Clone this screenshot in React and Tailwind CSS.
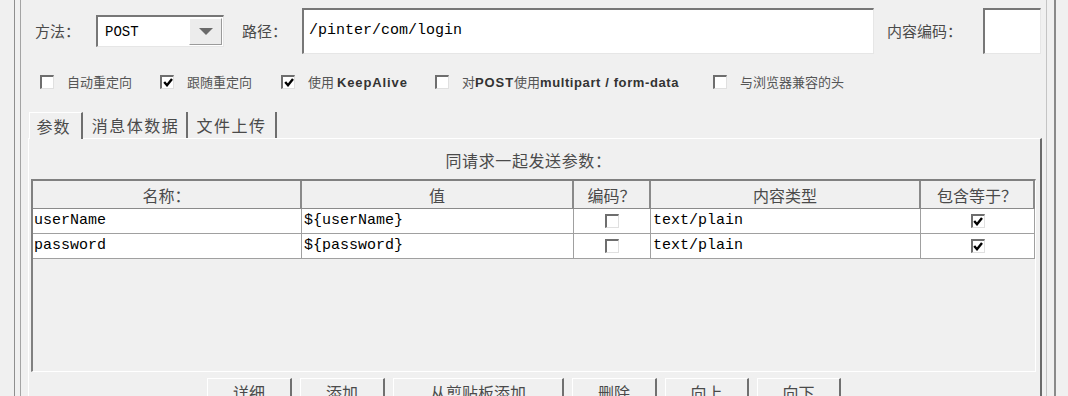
import React from "react";

const cjk = "font-['Noto_Sans_CJK_SC',sans-serif]";
const mono = "font-['Liberation_Mono',monospace]";
const latin = "font-['Liberation_Sans','Noto_Sans_CJK_SC',sans-serif]";

function Box({ checked }) {
  return (
    <span className="inline-flex w-[14px] h-[14px] shrink-0 items-center justify-center bg-white border-t-2 border-l-2 border-t-[#6e6e6e] border-l-[#6e6e6e] border-b border-r border-b-[#e0e0e0] border-r-[#e0e0e0]">
      {checked && (
        <svg width="10" height="9" viewBox="0 0 10 9">
          <path d="M1.2 4 L4 7.2 L9 1" stroke="#000" strokeWidth="2.4" fill="none" />
        </svg>
      )}
    </span>
  );
}

const checks = [
  { label: "自动重定向", w: "w-[73px]", checked: false },
  { label: "跟随重定向", w: "w-[74px]", checked: true },
  { label: "使用 ", latin: "KeepAlive", w: "w-[107px]", checked: true },
  { label: "对", latin: "POST", label2: "使用", latin2: "multipart / form-data", w: "w-[231px]", checked: false },
  { label: "与浏览器兼容的头", w: "w-[117px]", checked: false },
];

const cols = ["名称：", "值", "编码？", "内容类型", "包含等于？"];
const colW = ["w-[269px]", "w-[272px]", "w-[77px]", "w-[270px]", "w-[114px]"];

const rows = [
  { name: "userName", value: "${userName}", type: "text/plain" },
  { name: "password", value: "${password}", type: "text/plain" },
];

const buttons = [
  { t: "详细", w: "w-[85px]" },
  { t: "添加", w: "w-[85px]" },
  { t: "从剪贴板添加", w: "w-[171px]" },
  { t: "删除", w: "w-[85px]" },
  { t: "向上", w: "w-[84px]" },
  { t: "向下", w: "w-[84px]" },
];

export default function App() {
  return (
    <div className={`w-[1068px] h-[396px] overflow-hidden bg-[#f0f0f0] flex ${cjk}`}>
      <div className="ml-[14px] w-[1042px] h-[396px] shrink-0 border-l border-l-[#8e8e8e] border-r-2 border-r-[#8a8a8a] flex">
        <div className="ml-[5px] w-[1027px] h-[396px] shrink-0 border-l border-l-[#a4a4a4] border-r border-r-[#c4c4c4] flex flex-col">
          {/* row 1 */}
          <div className="mt-[8px] h-[46px] shrink-0 flex items-center text-[15px] text-[#4a4a4a]">
            <span className="ml-[14px] w-[61px] shrink-0">方法：</span>
            <div className="w-[128px] h-[32px] shrink-0 flex bg-white border-t-2 border-l-2 border-t-[#777] border-l-[#777] border-b border-r border-b-[#e6e6e6] border-r-[#e6e6e6]">
              <span className={`flex-1 pl-[7px] leading-[30px] text-[14px] text-black ${mono}`}>POST</span>
              <span className="w-[33px] my-[1px] mr-[1px] flex items-center justify-center bg-[#ececec] border-t border-l border-t-white border-l-white border-b border-r border-b-[#9a9a9a] border-r-[#9a9a9a]">
                <svg width="14" height="8" viewBox="0 0 14 8">
                  <path d="M0 0 H14 L7 7 Z" fill="#6a6a6a" />
                </svg>
              </span>
            </div>
            <span className="ml-[18px] w-[60px] shrink-0">路径：</span>
            <div className="w-[572px] h-[46px] shrink-0 flex items-center bg-white border-t-2 border-l-2 border-t-[#777] border-l-[#777] border-b border-r border-b-[#e6e6e6] border-r-[#e6e6e6]">
              <span className={`pl-[5px] text-[15px] text-black ${mono}`}>/pinter/com/login</span>
            </div>
            <span className="ml-[13px] w-[96px] shrink-0">内容编码：</span>
            <div className="w-[58px] h-[46px] shrink-0 bg-white border-t-2 border-l-2 border-t-[#777] border-l-[#777] border-b border-r border-b-[#e6e6e6] border-r-[#e6e6e6]" />
          </div>

          {/* row 2 */}
          <div className="mt-[14px] h-[28px] shrink-0 flex items-center gap-[20px] pl-[19px] text-[13px] text-[#555]">
            {checks.map((c, i) => (
              <div key={i} className="flex items-center">
                <Box checked={c.checked} />
                <span className={`ml-[13px] ${c.w} whitespace-nowrap`}>
                  {c.label}
                  {c.latin && <span className={`${latin} font-semibold text-[13px] tracking-[0.9px] text-[#333]`}>{c.latin}</span>}
                  {c.label2}
                  {c.latin2 && <span className={`${latin} font-semibold text-[13px] tracking-[0.6px] text-[#333]`}>{c.latin2}</span>}
                </span>
              </div>
            ))}
          </div>

          {/* tabs */}
          <div className="mt-[16px] ml-[8px] h-[26px] shrink-0 flex text-[16px] text-[#4a4a4a] relative z-10">
            <div className="w-[54px] h-[27px] flex items-center justify-center pr-[4px] bg-[#f0f0f0] border-l border-t border-l-white border-t-white border-r-2 border-r-[#6e6e6e] tracking-[1px]">参数</div>
            <div className="w-[105px] h-[26px] flex items-center justify-center pl-[2px] border-r-2 border-r-[#6e6e6e] tracking-[1.5px]">消息体数据</div>
            <div className="w-[89px] h-[26px] flex items-center justify-center border-r-2 border-r-[#6e6e6e] tracking-[1.5px]">文件上传</div>
          </div>

          {/* panel */}
          <div className="ml-[7px] w-[1014px] h-[300px] shrink-0 border-t border-l border-t-white border-l-white border-r-2 border-r-[#6a6a6a] flex flex-col">
            <div className="h-[40px] shrink-0 pt-[2px] flex items-center justify-center text-[16px] text-[#4a4a4a] tracking-[0.6px] pr-[12px]">
              同请求一起发送参数：
            </div>
            <div className="ml-[2px] w-[1005px] h-[193px] shrink-0 bg-[#f0f0f0] border-t-2 border-l-2 border-t-[#808080] border-l-[#808080] border-b border-r border-b-white border-r-white">
              <div className="flex h-[28px] border-b border-b-[#8a8a8a] text-[16px] text-[#4a4a4a]">
                {cols.map((c, i) => (
                  <div key={i} className={`${colW[i]} flex items-center justify-center border-r-2 border-r-[#8a8a8a]`}>
                    {c}
                  </div>
                ))}
              </div>
              {rows.map((r, i) => (
                <div key={i} className={`flex h-[25px] bg-white border-b border-b-[#a0a0a0] text-[15px] text-black ${mono}`}>
                  <div className={`${colW[0]} pl-[1px] flex items-center border-r border-r-[#a0a0a0]`}>{r.name}</div>
                  <div className={`${colW[1]} pl-[2px] flex items-center border-r border-r-[#a0a0a0]`}>{r.value}</div>
                  <div className={`${colW[2]} flex items-center justify-center border-r border-r-[#a0a0a0]`}>
                    <Box checked={false} />
                  </div>
                  <div className={`${colW[3]} pl-[2px] flex items-center border-r border-r-[#a0a0a0]`}>{r.type}</div>
                  <div className={`${colW[4]} flex items-center justify-center border-r border-r-[#a0a0a0]`}>
                    <Box checked={true} />
                  </div>
                </div>
              ))}
            </div>
            <div className="mt-[6px] ml-[178px] shrink-0 flex gap-[8px] text-[16px] text-[#4a4a4a]">
              {buttons.map((b) => (
                <div key={b.t} className={`${b.w} h-[27px] flex items-start justify-center pt-[3px] leading-[20px] border-t border-l border-t-white border-l-white border-r-2 border-b-2 border-r-[#707070] border-b-[#707070]`}>
                  {b.t}
                </div>
              ))}
            </div>
          </div>
        </div>
      </div>
    </div>
  );
}
